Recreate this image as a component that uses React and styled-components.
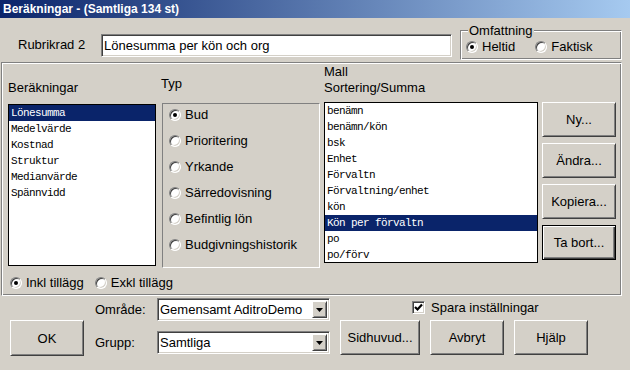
import React from 'react'
import styled, { createGlobalStyle, css } from 'styled-components'

const GlobalStyle = createGlobalStyle`
  html, body { margin: 0; padding: 0; background: #d4d0c8; }
  body {
    font-family: "Liberation Sans", Arial, sans-serif;
    font-size: 13px;
    color: #000;
  }
  * { box-sizing: border-box; }
`

const sunken = css`
  border: 1px solid;
  border-color: #808080 #ffffff #ffffff #808080;
  box-shadow: inset 1px 1px 0 #404040, inset -1px -1px 0 #d4d0c8;
`

const raised = css`
  border: 1px solid;
  border-color: #ffffff #404040 #404040 #ffffff;
  box-shadow: inset 1px 1px 0 #d4d0c8, inset -1px -1px 0 #808080;
`

const etched = css`
  border: 1px solid;
  border-color: #808080 #ffffff #ffffff #808080;
  box-shadow: inset 1px 1px 0 #ffffff, inset -1px -1px 0 #808080;
`

const Window = styled.div`
  width: 630px;
  height: 370px;
  overflow: hidden;
  background: #d4d0c8;
  display: flex;
  flex-direction: column;
`

const TitleBar = styled.div`
  height: 18px;
  padding-left: 3px;
  line-height: 18px;
  color: #fff;
  font-weight: bold;
  font-size: 12px;
  background: linear-gradient(to right, #0a246a, #a6caf0);
  white-space: nowrap;
`

const TopRow = styled.div`
  display: flex;
  align-items: flex-start;
  height: 44px;
  padding-left: 18px;
`

const FieldLabel = styled.div`
  width: ${p => p.$w}px;
  margin-top: ${p => p.$top || 0}px;
  line-height: 16px;
  white-space: nowrap;
`

const TextBox = styled.input`
  ${sunken};
  width: 351px;
  height: 23px;
  margin: 16px 0 0;
  padding: 0 0 0 2px;
  background: #fff;
  font: 13px "Liberation Sans", Arial, sans-serif;
  color: #000;
  outline: none;
`

const GroupBox = styled.div`
  ${etched};
  margin: 12px 0 0 8px;
  width: 162px;
  height: 30px;
`

const Legend = styled.div`
  width: fit-content;
  margin: -8px 0 0 7px;
  padding: 0 1px;
  line-height: 15px;
  background: #d4d0c8;
`

const RadioRow = styled.div`
  display: flex;
  align-items: center;
  line-height: 16px;
  padding-left: ${p => p.$pl || 0}px;
  margin-top: ${p => p.$mt || 0}px;
`

const RadioItem = styled.label`
  display: flex;
  align-items: center;
  gap: 4px;
  margin-right: ${p => p.$mr || 0}px;
  white-space: nowrap;
`

const RadioCircle = styled.span`
  position: relative;
  width: 12px;
  height: 12px;
  flex: none;
  border-radius: 50%;
  background: #fff;
  border: 1px solid;
  border-color: #808080 #ffffff #ffffff #808080;
  box-shadow: inset 1px 1px 0 #404040, inset -1px -1px 0 #d4d0c8;

  &::after {
    content: "";
    display: ${p => (p.$on ? 'block' : 'none')};
    position: absolute;
    left: 3px;
    top: 3px;
    width: 4px;
    height: 4px;
    border-radius: 50%;
    background: #000;
  }
`

const Frame = styled.div`
  ${etched};
  margin-left: 1px;
  width: 621px;
  height: 234px;
  padding: 1px 0 0 6px;
  display: flex;
  flex-direction: column;
`

const Columns = styled.div`
  display: flex;
  align-items: flex-start;
`

const Column = styled.div`
  display: flex;
  flex-direction: column;
  width: ${p => p.$w}px;
  margin-left: ${p => p.$ml || 0}px;
  padding-top: ${p => p.$top || 0}px;
`

const Heading = styled.div`
  line-height: 16px;
  margin-bottom: ${p => p.$mb || 0}px;
  margin-left: ${p => p.$ml || 0}px;
`

const ListBox = styled.div`
  height: ${p => p.$h}px;
  border: 1px solid #000;
  background: #fff;
  overflow: hidden;
`

const ListItem = styled.div`
  height: 16px;
  line-height: 16px;
  padding-left: 2px;
  font-family: "Liberation Mono", "Courier New", monospace;
  font-size: 11px;
  letter-spacing: -0.6px;
  white-space: nowrap;
  color: ${p => (p.$selected ? '#fff' : '#000')};
  background: ${p => (p.$selected ? '#0a246a' : 'transparent')};
`

const TypePanel = styled.div`
  height: 165px;
  border: 1px solid;
  border-color: #808080 #ffffff #ffffff #808080;
  padding: 3px 0 0 6px;
  display: flex;
  flex-direction: column;
  gap: 10px;
`

const ButtonStack = styled.div`
  display: flex;
  flex-direction: column;
  gap: 6px;
`

const Button = styled.button`
  ${raised};
  width: ${p => p.$w || 74}px;
  height: ${p => p.$h || 35}px;
  margin-top: ${p => p.$mt || 0}px;
  padding: 0;
  background: #d4d0c8;
  font: 13px "Liberation Sans", Arial, sans-serif;
  color: #000;
  ${p =>
    p.$default &&
    css`
      border: 1px solid #000;
      box-shadow: inset 1px 1px 0 #fff, inset -1px -1px 0 #404040, inset -2px -2px 0 #808080;
    `}
`

const BottomBar = styled.div`
  display: flex;
  align-items: flex-start;
  padding-left: 10px;
`

const FieldGrid = styled.div`
  display: grid;
  grid-template-columns: 62px 173px;
  row-gap: 10px;
  align-items: center;
  margin: 2px 0 0 11px;
`

const Combo = styled.div`
  ${sunken};
  height: 23px;
  display: flex;
  align-items: stretch;
  padding: 2px;
  background: #fff;
`

const ComboText = styled.div`
  flex: 1;
  padding-left: 0;
  line-height: 17px;
  white-space: nowrap;
  overflow: hidden;
`

const ComboButton = styled.div`
  ${raised};
  width: 15px;
  flex: none;
  display: flex;
  align-items: center;
  justify-content: center;
  background: #d4d0c8;
`

const RightBlock = styled.div`
  display: flex;
  flex-direction: column;
  margin-left: 10px;
`

const CheckRow = styled.label`
  display: flex;
  align-items: center;
  gap: 6px;
  margin-top: 5px;
  padding-left: 72px;
  line-height: 13px;
`

const CheckBox = styled.span`
  ${sunken};
  width: 13px;
  height: 13px;
  background: #fff;
  display: flex;
  align-items: center;
  justify-content: center;
`

const ButtonRow = styled.div`
  display: flex;
  gap: 10px;
  margin-top: 6px;
`

const Arrow = () => (
  <svg width="7" height="4" viewBox="0 0 7 4">
    <path d="M0 0h7L3.5 4z" fill="#000" />
  </svg>
)

const Check = () => (
  <svg width="9" height="9" viewBox="0 0 9 9">
    <path d="M1 4l2.5 2.5L8 1.5" fill="none" stroke="#000" strokeWidth="2.2" />
  </svg>
)

function Radio({ on, children, mr }) {
  return (
    <RadioItem $mr={mr}>
      <RadioCircle $on={on} />
      {children}
    </RadioItem>
  )
}

const calcs = ['Lönesumma', 'Medelvärde', 'Kostnad', 'Struktur', 'Medianvärde', 'Spännvidd']
const types = ['Bud', 'Prioritering', 'Yrkande', 'Särredovisning', 'Befintlig lön', 'Budgivningshistorik']
const templates = [
  'benämn', 'benämn/kön', 'bsk', 'Enhet', 'Förvaltn', 'Förvaltning/enhet',
  'kön', 'Kön per förvaltn', 'po', 'po/förv'
]

export default function App() {
  return (
    <Window>
      <GlobalStyle />
      <TitleBar>Beräkningar - (Samtliga 134 st)</TitleBar>

      <TopRow>
        <FieldLabel $w={83} $top={19}>Rubrikrad 2</FieldLabel>
        <TextBox readOnly value="Lönesumma per kön och org" />
        <GroupBox>
          <Legend>Omfattning</Legend>
          <RadioRow $pl={5} $mt={1}>
            <Radio on mr={20}>Heltid</Radio>
            <Radio>Faktisk</Radio>
          </RadioRow>
        </GroupBox>
      </TopRow>

      <Frame>
        <Columns>
          <Column $w={148} $top={16}>
            <Heading $mb={8}>Beräkningar</Heading>
            <ListBox $h={162}>
              {calcs.map((c, i) => (
                <ListItem key={c} $selected={i === 0}>{c}</ListItem>
              ))}
            </ListBox>
          </Column>

          <Column $w={158} $ml={6} $top={12}>
            <Heading $mb={11} $ml={-1}>Typ</Heading>
            <TypePanel>
              {types.map((t, i) => (
                <RadioRow key={t}>
                  <Radio on={i === 0}>{t}</Radio>
                </RadioRow>
              ))}
            </TypePanel>
          </Column>

          <Column $w={214} $ml={4}>
            <Heading $mb={6}>Mall<br />Sortering/Summa</Heading>
            <ListBox $h={161}>
              {templates.map((t, i) => (
                <ListItem key={t} $selected={i === 7}>{t}</ListItem>
              ))}
            </ListBox>
          </Column>

          <Column $w={74} $ml={4} $top={38}>
            <ButtonStack>
              <Button>Ny...</Button>
              <Button>Ändra...</Button>
              <Button>Kopiera...</Button>
              <Button $default>Ta bort...</Button>
            </ButtonStack>
          </Column>
        </Columns>

        <RadioRow $pl={2} $mt={7}>
          <Radio on mr={11}>Inkl tillägg</Radio>
          <Radio>Exkl tillägg</Radio>
        </RadioRow>
      </Frame>

      <BottomBar>
        <Button $h={36} $mt={24}>OK</Button>
        <FieldGrid>
          <FieldLabel>Område:</FieldLabel>
          <Combo>
            <ComboText>Gemensamt AditroDemo</ComboText>
            <ComboButton><Arrow /></ComboButton>
          </Combo>
          <FieldLabel>Grupp:</FieldLabel>
          <Combo>
            <ComboText>Samtliga</ComboText>
            <ComboButton><Arrow /></ComboButton>
          </Combo>
        </FieldGrid>
        <RightBlock>
          <CheckRow>
            <CheckBox><Check /></CheckBox>
            Spara inställningar
          </CheckRow>
          <ButtonRow>
            <Button $w={80}>Sidhuvud...</Button>
            <Button>Avbryt</Button>
            <Button>Hjälp</Button>
          </ButtonRow>
        </RightBlock>
      </BottomBar>
    </Window>
  )
}
